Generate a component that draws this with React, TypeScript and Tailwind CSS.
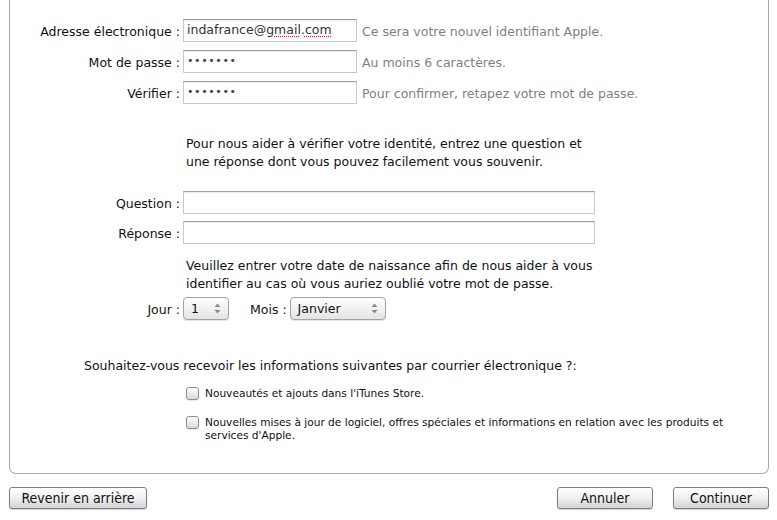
import { ReactNode } from 'react'

const font = { fontFamily: '"DejaVu Sans", "Noto Sans", sans-serif' }

function Label({ children }: { children: ReactNode }) {
  return <div className="w-[170px] shrink-0 text-right text-[12.5px] text-[#111] pt-[4px]">{children}</div>
}

function TextBox({ w, children }: { w: string; children?: ReactNode }) {
  return (
    <div
      className={`${w} h-[23px] shrink-0 border border-[#c9c9c9] border-t-[#9f9f9f] bg-white px-[3px] flex items-center text-[12.5px] text-[#333] shadow-[inset_0_1px_1px_rgba(0,0,0,0.08)]`}
    >
      {children}
    </div>
  )
}

function Arrows() {
  return (
    <svg width="7" height="11" viewBox="0 0 7 11" className="shrink-0">
      <path d="M3.5 0.5 L6.5 4 L0.5 4 Z" fill="#8a8a8a" />
      <path d="M3.5 10.5 L6.5 7 L0.5 7 Z" fill="#8a8a8a" />
    </svg>
  )
}

function Select({ w, value }: { w: string; value: string }) {
  return (
    <div
      className={`${w} h-[23px] shrink-0 rounded-[4px] border border-[#a3a3a3] bg-gradient-to-b from-white to-[#e4e4e4] pl-[7px] pr-[7px] flex items-center justify-between text-[12.5px] text-[#111] shadow-[0_1px_1px_rgba(0,0,0,0.12)]`}
    >
      <span className="pt-[2px]">{value}</span>
      <Arrows />
    </div>
  )
}

function Check({ children }: { children: ReactNode }) {
  return (
    <div className="flex items-start gap-[6px] pl-[176px]">
      <div className="w-[13px] h-[13px] shrink-0 rounded-[3px] border border-[#8e8e8e] bg-gradient-to-b from-white to-[#d9d9d9] shadow-[0_1px_1px_rgba(0,0,0,0.1)]" />
      <div className="text-[10.6px] leading-[13px] text-[#111] w-[540px]">{children}</div>
    </div>
  )
}

function Button({ w, children }: { w: string; children: ReactNode }) {
  return (
    <button
      className={`${w} h-[22px] rounded-[3px] border border-[#7d7d7d] bg-gradient-to-b from-white via-[#f0f0f0] to-[#d4d4d4] text-[14px] text-[#111] flex items-center justify-center shadow-[0_1px_1px_rgba(0,0,0,0.18)]`}
      style={{ fontFamily: '"DejaVu Sans Condensed", "DejaVu Sans", sans-serif' }}
    >
      {children}
    </button>
  )
}

const Dots = () => <span className="text-[11px] tracking-[0.6px] text-[#444]">•••••••</span>

export default function App() {
  return (
    <div className="w-[777px] h-[520px] bg-white overflow-hidden" style={font}>
      <div className="ml-[9px] w-[760px] h-[474px] border-x border-b border-[#a9a9a9] rounded-b-[7px] pt-[19px]">
        <div className="flex flex-col gap-[8px]">
          <div className="flex items-center gap-[3px]">
            <Label>Adresse électronique :</Label>
            <TextBox w="w-[174px]">
              <span>
                indafrance@<span className="underline decoration-dotted decoration-[#e02020] underline-offset-2">gmail</span>.
                <span className="underline decoration-dotted decoration-[#e02020] underline-offset-2">com</span>
              </span>
            </TextBox>
            <span className="ml-[2px] pt-[4px] text-[12.5px] text-[#7f7f7f]">Ce sera votre nouvel identifiant Apple.</span>
          </div>
          <div className="flex items-center gap-[3px]">
            <Label>Mot de passe :</Label>
            <TextBox w="w-[174px]">
              <Dots />
            </TextBox>
            <span className="ml-[2px] pt-[4px] text-[12.5px] text-[#7f7f7f]">Au moins 6 caractères.</span>
          </div>
          <div className="flex items-center gap-[3px]">
            <Label>Vérifier :</Label>
            <TextBox w="w-[174px]">
              <Dots />
            </TextBox>
            <span className="ml-[2px] pt-[4px] text-[12.5px] text-[#7f7f7f]">Pour confirmer, retapez votre mot de passe.</span>
          </div>
        </div>

        <p className="mt-[31px] ml-[176px] w-[405px] text-[12.5px] leading-[18px] text-[#111]">
          Pour nous aider à vérifier votre identité, entrez une question et une réponse dont vous pouvez facilement vous souvenir.
        </p>

        <div className="mt-[20px] flex flex-col gap-[7px]">
          <div className="flex items-center gap-[3px]">
            <Label>Question :</Label>
            <TextBox w="w-[412px]" />
          </div>
          <div className="flex items-center gap-[3px]">
            <Label>Réponse :</Label>
            <TextBox w="w-[412px]" />
          </div>
        </div>

        <p className="mt-[13px] ml-[176px] w-[420px] text-[12.5px] leading-[18px] text-[#111]">
          Veuillez entrer votre date de naissance afin de nous aider à vous identifier au cas où vous auriez oublié votre mot de passe.
        </p>

        <div className="mt-[4px] flex items-center gap-[3px]">
          <Label>Jour :</Label>
          <Select w="w-[46px]" value="1" />
          <span className="ml-[18px] pt-[4px] text-[12.5px] text-[#111]">Mois :</span>
          <Select w="w-[96px]" value="Janvier" />
        </div>

        <p className="mt-[37px] ml-[74px] text-[12.5px] leading-[18px] text-[#111]">
          Souhaitez-vous recevoir les informations suivantes par courrier électronique ?:
        </p>

        <div className="mt-[12px] flex flex-col gap-[16px]">
          <Check>Nouveautés et ajouts dans l'iTunes Store.</Check>
          <Check>
            Nouvelles mises à jour de logiciel, offres spéciales et informations en relation avec les produits et services d'Apple.
          </Check>
        </div>
      </div>

      <div className="mt-[13px] ml-[9px] w-[760px] flex items-center">
        <Button w="w-[138px]">Revenir en arrière</Button>
        <div className="flex-1" />
        <Button w="w-[96px]">Annuler</Button>
        <div className="w-[20px]" />
        <Button w="w-[96px]">Continuer</Button>
      </div>
    </div>
  )
}
